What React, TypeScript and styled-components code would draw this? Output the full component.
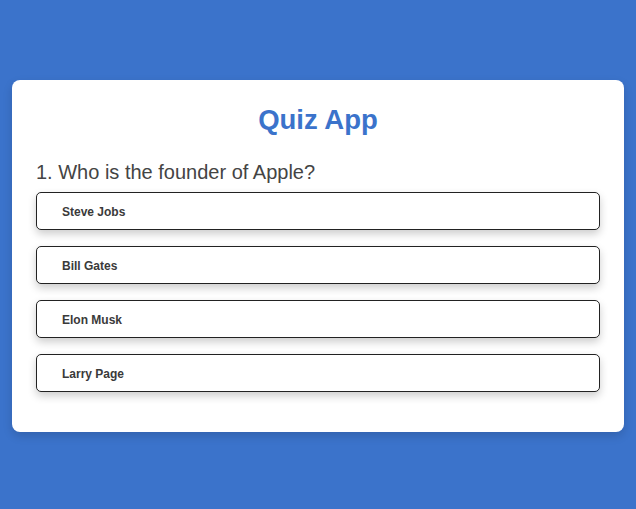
import React from "react";
import styled, { createGlobalStyle } from "styled-components";

const Global = createGlobalStyle`
  html, body { margin: 0; padding: 0; }
  body {
    background: #3b73cb;
    font-family: "Liberation Sans", Arial, sans-serif;
    min-height: 509px;
  }
`;

const Page = styled.div`
  display: flex;
  justify-content: center;
  padding: 80px 12px 0;
  box-sizing: border-box;
`;

const Card = styled.div`
  width: 100%;
  background: #fff;
  border-radius: 8px;
  padding: 24px;
  box-sizing: border-box;
  box-shadow: 0 4px 10px rgba(0, 0, 0, 0.15);
`;

const Title = styled.h1`
  margin: 0 0 25px;
  text-align: center;
  color: #3b73cb;
  font-size: 27.5px;
  line-height: 32px;
  font-weight: bold;
`;

const Question = styled.h2`
  margin: 0 0 8px;
  font-size: 20px;
  line-height: 23px;
  font-weight: normal;
  color: #444;
`;

const Options = styled.div`
  display: flex;
  flex-direction: column;
  gap: 16px;
  margin-bottom: 16px;
`;

const Option = styled.button`
  display: block;
  width: 100%;
  height: 38px;
  text-align: left;
  padding: 2px 25px 0;
  background: #fff;
  border: 1px solid #222;
  border-radius: 5px;
  box-shadow: 0 4px 8px rgba(0, 0, 0, 0.2);
  font-family: "Liberation Sans", Arial, sans-serif;
  font-weight: bold;
  font-size: 12px;
  color: #3a3a3a;
  cursor: pointer;
`;

const options = ["Steve Jobs", "Bill Gates", "Elon Musk", "Larry Page"];

export default function App() {
  return (
    <>
      <Global />
      <Page>
        <Card>
          <Title>Quiz App</Title>
          <Question>1. Who is the founder of Apple?</Question>
          <Options>
            {options.map((o) => (
              <Option key={o}>{o}</Option>
            ))}
          </Options>
        </Card>
      </Page>
    </>
  );
}
